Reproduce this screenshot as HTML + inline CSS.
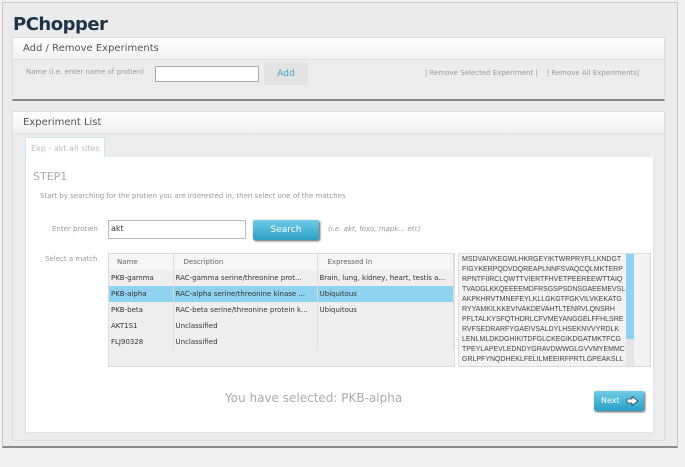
<!DOCTYPE html>
<html><head><style>
*{box-sizing:border-box;margin:0;padding:0}
body{width:685px;height:467px;background:#f0f0f0;font-family:"DejaVu Sans","Liberation Sans",sans-serif;position:relative;overflow:hidden}
.a{position:absolute}
.outer{left:2px;top:2px;width:676px;height:446px;background:#ebebeb;border:1px solid #c8c8c8;border-bottom:2px solid #8a8a8a}
.ph{background:linear-gradient(#fff,#f2f2f2);border-bottom:1px solid #e0e0e0;font-size:10px;color:#555;padding-left:10px;line-height:21px}
.t{font-size:7px;color:#999}
td{font-size:7px;color:#333;height:16px;padding-left:2px;border-right:1px solid #ddd;white-space:nowrap;overflow:hidden}
table{border-collapse:collapse;table-layout:fixed}
</style></head><body>
<div class="a outer"></div>
<div class="a" style="left:13px;top:14px;font-size:18px;font-weight:bold;color:#1e3446;letter-spacing:-0.5px">PChopper</div>

<div class="a" style="left:12px;top:37px;width:653px;height:64px;background:#ececec;border:1px solid #ddd;border-bottom:2px solid #888">
<div class="ph">Add / Remove Experiments</div></div>
<div class="a t" style="left:26px;top:68px">Name (i.e. enter name of protien)</div>
<div class="a" style="left:155px;top:66px;width:104px;height:16px;background:#fff;border:1px solid #aaa"></div>
<div class="a" style="left:264px;top:63px;width:44px;height:22px;background:#e3e3e3;color:#3aa6c8;font-size:9px;text-align:center;line-height:22px">Add</div>
<div class="a t" style="left:425px;top:69px">| Remove Selected Experiment |&nbsp;&nbsp;&nbsp; | Remove All Experiments|</div>

<div class="a" style="left:12px;top:111px;width:653px;height:330px;background:#ececec;border:1px solid #ddd">
<div class="ph">Experiment List</div></div>
<div class="a" style="left:25px;top:137px;width:80px;height:21px;background:#fff;border:1px solid #cfe6ef;border-bottom:none;font-size:8px;color:#bbb;padding:6px 0 0 5px">Exp - akt all sites</div>
<div class="a" style="left:25px;top:157px;width:629px;height:276px;background:#fff;border:1px solid #e4e4e4;border-top:none"></div>
<div class="a" style="left:33px;top:170px;font-size:11px;color:#aaa">STEP1</div>
<div class="a t" style="left:40px;top:192px">Start by searching for the protien you are interested in, then select one of the matches</div>
<div class="a t" style="left:52px;top:225px">Enter protien</div>
<div class="a" style="left:108px;top:220px;width:138px;height:19px;border:1px solid #bbb;font-size:8px;color:#333;padding:3px 0 0 2px">akt</div>
<div class="a" style="left:253px;top:220px;width:66px;height:20px;background:linear-gradient(#6fcbe6,#2a9fc4);border-radius:2px;box-shadow:1px 1px 2px #555;color:#fff;font-size:9px;text-align:center;line-height:20px">Search</div>
<div class="a t" style="left:328px;top:225px;font-style:italic">(i.e. akt, foxo, mapk... etc)</div>
<div class="a t" style="left:45px;top:255px">Select a match</div>

<div class="a" style="left:108px;top:253px;width:347px;height:114px;background:#efefef;border:1px solid #ddd">
<table style="width:345px">
<colgroup><col style="width:64px"><col style="width:144px"><col></colgroup>
<tr style="background:#f6f6f6;color:#666"><td style="padding-left:8px;color:#666">Name</td><td style="padding-left:10px;color:#666">Description</td><td style="padding-left:10px;color:#666">Expressed In</td></tr>
<tr><td>PKB-gamma</td><td>RAC-gamma serine/threonine prot...</td><td>Brain, lung, kidney, heart, testis a...</td></tr>
<tr style="background:#8fd3f0"><td>PKB-alpha</td><td>RAC-alpha serine/threonine kinase ...</td><td>Ubiquitous</td></tr>
<tr><td>PKB-beta</td><td>RAC-beta serine/threonine protein k...</td><td>Ubiquitous</td></tr>
<tr><td>AKT1S1</td><td>Unclassified</td><td></td></tr>
<tr><td>FLJ90328</td><td>Unclassified</td><td></td></tr>
</table></div>

<div class="a" style="left:458px;top:253px;width:193px;height:114px;background:#f2f2f2;border:1px solid #ddd;font-family:'Liberation Sans',sans-serif;font-size:7px;line-height:10px;color:#444;padding:1px 0 0 3px;overflow:hidden">MSDVAIVKEGWLHKRGEYIKTWRPRYFLLKNDGT<br>FIGYKERPQDVDQREAPLNNFSVAQCQLMKTERP<br>RPNTFIIRCLQWTTVIERTFHVETPEEREEWTTAIQ<br>TVADGLKKQEEEEMDFRSGSPSDNSGAEEMEVSL<br>AKPKHRVTMNEFEYLKLLGKGTFGKVILVKEKATG<br>RYYAMKILKKEVIVAKDEVAHTLTENRVLQNSRH<br>PFLTALKYSFQTHDRLCFVMEYANGGELFFHLSRE<br>RVFSEDRARFYGAEIVSALDYLHSEKNVVYRDLK<br>LENLMLDKDGHIKITDFGLCKEGIKDGATMKTFCG<br>TPEYLAPEVLEDNDYGRAVDWWGLGVVMYEMMC<br>GRLPFYNQDHEKLFELILMEEIRFPRTLGPEAKSLL</div>
<div class="a" style="left:626px;top:254px;width:8px;height:112px;background:#e6e6e6"></div>
<div class="a" style="left:626px;top:254px;width:8px;height:85px;background:#8fd3f0"></div>

<div class="a" style="left:225px;top:391px;font-size:12px;color:#aaa">You have selected: PKB-alpha</div>
<div class="a" style="left:594px;top:391px;width:50px;height:20px;background:linear-gradient(#6fcbe6,#2a9fc4);border-radius:2px;box-shadow:1px 1px 2px #555;color:#fff;font-size:8px;line-height:20px;padding-left:7px">Next
<svg style="position:absolute;left:32px;top:5px" width="13" height="10" viewBox="0 0 13 10"><path d="M1 3H6V0.5L12 5L6 9.5V7H1Z" fill="#fff" stroke="#245" stroke-width="0.8"/></svg></div>
</body></html>
